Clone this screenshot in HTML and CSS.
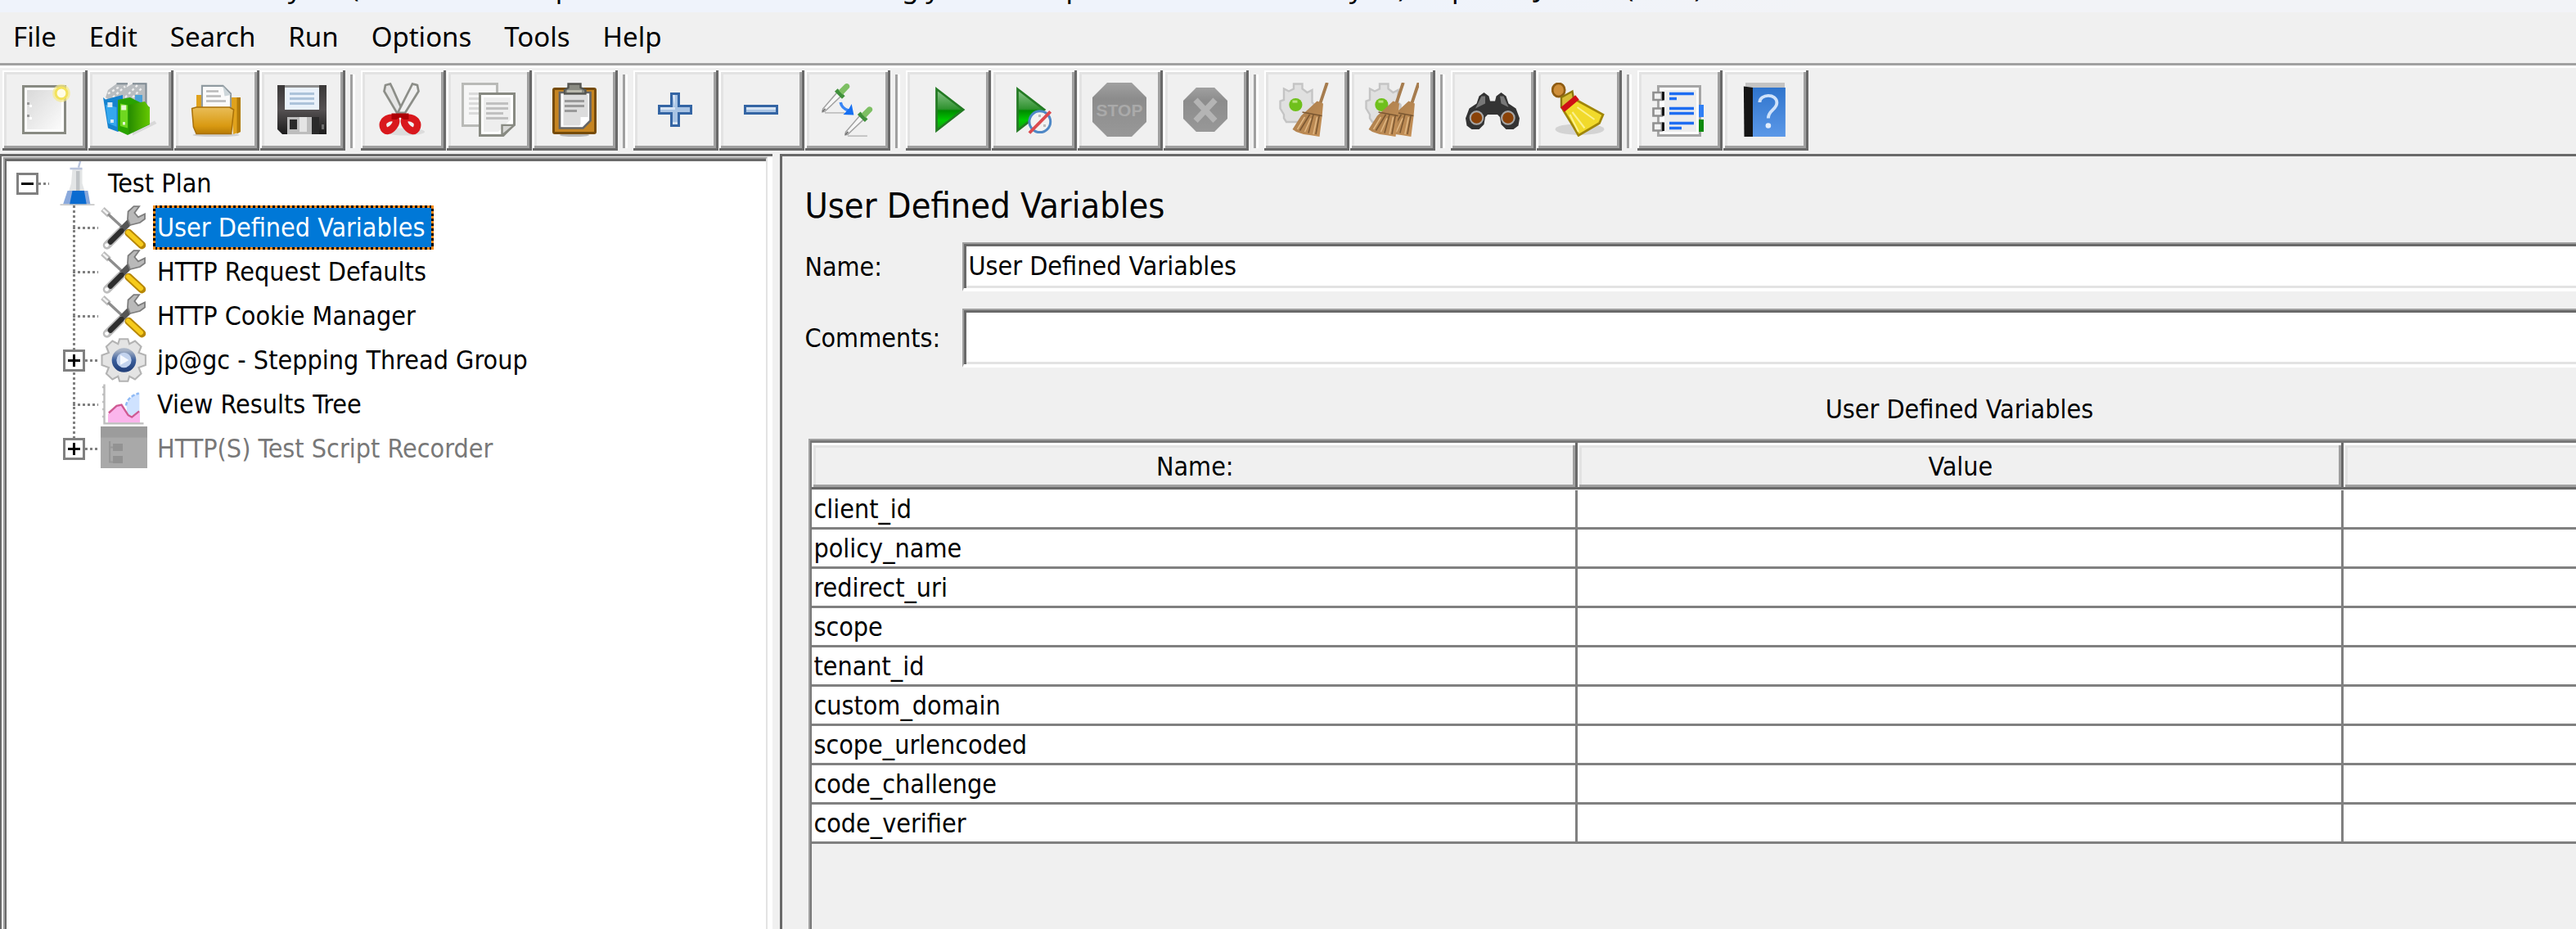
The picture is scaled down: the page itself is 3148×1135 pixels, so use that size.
FILE: index.html
```html
<!DOCTYPE html>
<html lang="en">
<head>
<meta charset="utf-8">
<title>Apache JMeter</title>
<link rel="stylesheet" href="styles.css">
</head>
<body>
<svg class="defs" aria-hidden="true">
  <defs>
    <linearGradient id="paper" x1="0" y1="0" x2="1" y2="1"><stop offset="0" stop-color="#d9d9d9"/><stop offset="1" stop-color="#fbfbfb"/></linearGradient>
    <linearGradient id="gold" x1="0" y1="0" x2="0" y2="1"><stop offset="0" stop-color="#e9bd58"/><stop offset=".7" stop-color="#d99a12"/><stop offset="1" stop-color="#b87b05"/></linearGradient>
    <linearGradient id="dark" x1="0" y1="0" x2="0" y2="1"><stop offset="0" stop-color="#3a3838"/><stop offset=".5" stop-color="#555152"/><stop offset="1" stop-color="#1b1b1b"/></linearGradient>
    <linearGradient id="go" x1="0" y1="0" x2="0" y2="1"><stop offset="0" stop-color="#8fc88f"/><stop offset=".48" stop-color="#2f922f"/><stop offset=".52" stop-color="#008a00"/><stop offset=".75" stop-color="#00c800"/><stop offset="1" stop-color="#1a9a1a"/></linearGradient>
    <linearGradient id="leaf" x1="0" y1="0" x2="1" y2="0"><stop offset="0" stop-color="#268c00"/><stop offset="1" stop-color="#66c800"/></linearGradient>
    <linearGradient id="book" x1="0" y1="0" x2="0" y2="1"><stop offset="0" stop-color="#2f74cc"/><stop offset="1" stop-color="#5b98e8"/></linearGradient>
    <linearGradient id="straw" x1="0" y1="0" x2="1" y2="1"><stop offset="0" stop-color="#a57a4a"/><stop offset="1" stop-color="#c79258"/></linearGradient>
    <linearGradient id="off" x1="0" y1="0" x2="0" y2="1"><stop offset="0" stop-color="#a0a0a0"/><stop offset=".3" stop-color="#8c8c8c"/><stop offset="1" stop-color="#989898"/></linearGradient>
    <linearGradient id="ring" x1="0" y1="0" x2="0" y2="1"><stop offset="0" stop-color="#a9b4c6"/><stop offset=".5" stop-color="#3c5f9c"/><stop offset="1" stop-color="#24427c"/></linearGradient>
    <g id="cog"><path fill="#e0e0e0" stroke="#c4c4c4" stroke-width=".8" d="M6 2.500V.5h3.500v2l2 1.500 2-1v5l1 1v4l-4 2-1 1H3l-1-1.500V13L.5 10.500v-3L2 7V2.500l2 1z"/><circle cx="6.800" cy="9" r="2.700" fill="#6fc01c"/><path fill="#b6e377" d="M5.500 7.200h2v1h-2z"/></g>
    <g id="besom"><path stroke="#a67c4e" stroke-width="1.300" d="M19.600 0l-3 9"/><path fill="url(#straw)" d="M15.500 7.500l2.500 1L17.500 14 16.500 22 13 21.400 10 21 7 20 5.500 19 9 13.500z"/><path stroke="#7b5731" stroke-width=".5" fill="none" d="M9.500 12l8 1.500M12.500 13l-4 6.500M14 13l-2 7.500M16.500 13l-1.500 8"/><path stroke="#e0b884" stroke-width=".5" d="M10.500 14l-3 5M13 14.500L10.500 20M15.500 14l-1.500 7"/></g>
    <g id="dropper"><path fill="#f7f7f7" stroke="#a0a0a0" stroke-width=".5" d="M7.300 3.600l1.600 1.600L2 11.700l-1 .2.200-1.200z"/><path stroke="#777" stroke-width=".6" d="M1 11.800l1.200-1.200"/><path fill="#3f8f3a" d="M6 3.600l1.200-1.200 3 3L9 6.600z"/><path fill="#7dbf63" d="M7.600 3.200l2.600-2.600c1-.8 2.500.5 1.700 1.600L9.300 4.900z"/><path stroke="#aaa" stroke-width=".4" d="M2 12.300h8"/></g>
  </defs>
  <symbol id="i-tools" viewBox="0 0 19 18">
    <path stroke="#bcbcbc" stroke-width="2.200" d="M.800 1.500L3.500 4"/><path stroke="#f4f4f4" stroke-width=".8" d="M1 1.700L3 3.500"/><path stroke="#8d8d8d" stroke-width="1.100" d="M3 3.500L9.500 9.500"/>
    <path stroke="#555" stroke-width="2.600" d="M8 10.500l4-4"/><path fill="#b9b9b9" stroke="#7d7d7d" stroke-width=".6" d="M11 5.500l.2-3L13.500.4h2.200L13.800 3l1.500 1.800L18 3.500v2L16 7l-4 1z"/>
    <path stroke="#bdbdbd" stroke-width="3.400" stroke-linecap="round" d="M2.600 16.200L8 10.800"/><path stroke="#2e2e2e" stroke-width="2.200" stroke-linecap="round" d="M4 14.800l4.500-4.500"/><circle cx="2.500" cy="16.200" r=".8" fill="#fff"/>
    <path stroke="#b78705" stroke-width="3.200" stroke-linecap="round" d="M11.400 11.200l5.400 5"/><path stroke="#f6cb1c" stroke-width="1.900" stroke-linecap="round" d="M11.200 11l5.200 4.800"/>
  </symbol>
</svg>

<div class="app">
  <div class="titlebar">                                         y       (                            p                                               g y                  p                                      y     )    Apache JMeter (5.6.3)</div>

  <nav class="menubar">
    <button>File</button><button>Edit</button><button>Search</button><button>Run</button><button>Options</button><button>Tools</button><button>Help</button>
  </nav>

  <div class="toolbar" role="toolbar">
    <div class="group">
      <button aria-label="New"><svg viewBox="0 0 22 22"><path fill="#888a82" d="M2 1h18v20H2z"/><path fill="#fff" d="M3 2h16v18H3z"/><path fill="url(#paper)" d="M4 3h14v16H4z"/><path fill="#999" d="M4 8h1v1H4zM4 13h1v1H4z"/><path fill="#fff" d="M5 9h1v1H5zM5 14h1v1H5z"/><circle cx="18" cy="4.300" r="3.600" fill="#f5e98a" opacity=".7"/><circle cx="18" cy="4.300" r="2.300" fill="#fffde6" stroke="#f3e25b"/></svg></button>
      <button aria-label="Templates"><svg viewBox="0 0 22 22"><path fill="#d8d8d8" d="M12 20l9-4.500.8 1.200L12 21.500z"/><path fill="#b9bdc0" d="M1 6l1-3L5.500.4H10l-.5 1.500L12 .4h5.500V10L8 11z"/><path fill="none" stroke="#7f8a92" stroke-width=".7" d="M5.500.4H10M12 .4h5.500V10"/><path fill="none" stroke="#eee" stroke-width=".8" stroke-dasharray="1 1" d="M2 4.500l5-3M4 6l5-4.500M9 6l5-5M12 6l4-4"/><path fill="#1683cf" d="M0 6l1 .8 5-1.300L8 5v14l-2 1-4-1.500z"/><path fill="#35a7ee" d="M1 9l4.500 1V18L2 16.500z"/><path fill="#d6e9f6" d="M1.800 8h2v2h-2zM3 15h1.300v1.300H3z"/><path fill="#4aa0d8" d="M13 5h3v4l-3-2z"/><path fill="#2aa300" d="M6 7l5-1 8 4v7l-9 4.300L6 19.500z"/><path fill="url(#leaf)" d="M10.500 9L17 7.700l2 2.600v6.500l-8.500 4z"/><path fill="#6fd720" d="M7 8.500l3 .7v9.300l-3-.8z"/><path fill="#e6f7d4" d="M7.400 9.200h2v2h-2zM8 16h1v1.200H8z"/></svg></button>
      <button aria-label="Open"><svg viewBox="0 0 22 22"><ellipse cx="11" cy="21.300" rx="9.500" ry=".8" fill="#cfcfcf"/><path fill="#e0a21c" d="M3 5h2.300v6H3zM17 6h4v14l-3 1z"/><path fill="#b17a08" d="M19.500 6H21v14l-1.500.8z"/><path fill="#fafafa" stroke="#8f9aa0" stroke-width=".7" d="M5.300 1.300h8.500L17 4.500V12H5.300z"/><path fill="#cdd6da" d="M13.800 1.300L17 5l-2.500.5z"/><path stroke="#b9b9b9" stroke-width=".9" d="M7 3.500h5M7 5.500h6M7 7.500h8"/><path fill="url(#gold)" stroke="#a87008" stroke-width=".5" d="M1.200 10.500L3 10h13.500l1.700 1-1 9.800H3L1.800 18z"/></svg></button>
      <button aria-label="Save"><svg viewBox="0 0 22 22"><path fill="url(#dark)" d="M1 1h20v20H3l-2-2z"/><path fill="#8e8e8e" d="M4 1h14v1H4z"/><path fill="#e9f1fa" d="M4 2h14v9H4z"/><path stroke="#acc3da" d="M6 4.500h10M6 6.500h10M6 8.500h10"/><path fill="#bdbdbd" d="M5 14h10v7H5z"/><path fill="#e4e4e4" d="M10 14h3v6h-3z"/><path fill="#2a2a2a" d="M6 15h3v4H6zM15 14h3v7h-3z"/><path fill="#6f6f6f" d="M19 17h1v2h-1z"/></svg></button>
    </div>
    <i class="sep"></i>
    <div class="group">
      <button aria-label="Cut"><svg viewBox="0 0 22 22"><ellipse cx="12" cy="20" rx="8" ry="1.500" fill="#dcdcdc"/><path fill="#e6e6e6" stroke="#8c8e88" stroke-width=".9" d="M3.500 3.500L4 1l2-.5L7 2.500l4 9-2.300.8z"/><path fill="#f0f0f0" stroke="#8c8e88" stroke-width=".9" d="M17.500 3.500L17 1l-2-.5L14 2.500l-5 9.800h3z"/><path fill="none" stroke="#d9181d" stroke-width="2.900" d="M4 15.200c1.500-1.200 4-1.200 4.300.2s-1.500 3.800-3.300 4.200-3-3.200-1-4.400zM16 15.200c-1.500-1.200-4-1.200-4.300.2s1.500 3.800 3.300 4.200 3-3.200 1-4.400z"/><path fill="#ad0006" d="M6.500 12.500h7V15h-2L10 14.200 8.500 15h-2z"/></svg></button>
      <button aria-label="Copy"><svg viewBox="0 0 22 22"><path fill="#f6f6f6" stroke="#b9bab7" d="M.5.500h14v17H.500z"/><path stroke="#dadada" d="M3 4.500h8M3 6.500h8M3 8.500h8M3 10.500h5M3 12.500h5"/><path fill="#fff" stroke="#888a82" d="M7.500 4.500h14V17l-4.500 4.500H7.500z"/><path fill="#eee" d="M9 6h11v9l-5 5H9z"/><path stroke="#c0c0c0" d="M10 8.500h9M10 10.500h9M10 12.500h7M10 14.500h9"/><path fill="#d7d7d5" stroke="#888a82" stroke-width=".8" d="M16.500 21.500v-4.200h5z"/></svg></button>
      <button aria-label="Paste"><svg viewBox="0 0 22 22"><ellipse cx="11" cy="21.300" rx="6" ry=".7" fill="#b5b5b5"/><rect x="2.500" y="2.500" width="17" height="18" rx=".5" fill="#c58421" stroke="#764b07"/><path fill="#fff" stroke="#666" stroke-width=".9" d="M5 4h12.500v11.500L14.500 18.500H5z"/><path fill="#ddd" d="M6.500 5h10v9L13 17.500H6.500z"/><path fill="#fff" d="M13.500 17.500v-3.500h3.500z"/><path stroke="#9a9a9a" d="M7 7.500h8M7 9.500h8M7 11.500h5"/><path fill="#8a8b82" stroke="#555651" stroke-width=".8" d="M7 4.500V3l1.500-1V.5h5V2L15.500 3v1.500z"/><path fill="#b9b9ad" d="M8 3h6v1H8z"/></svg></button>
    </div>
    <i class="sep"></i>
    <div class="group">
      <button aria-label="Expand All"><svg viewBox="0 0 22 22"><path fill="#a9c4e4" stroke="#3465a4" d="M9.500 4.500h3v5h5v3h-5v5h-3v-5h-5v-3h5z"/><path fill="#d7e4f3" d="M10 5h1v5H5v1h6v-1zM10 16h2v1h-2z"/></svg></button>
      <button aria-label="Collapse All"><svg viewBox="0 0 22 22"><path fill="#a9c4e4" stroke="#3465a4" d="M4.500 9.500h13v3h-13z"/><path fill="#d7e4f3" d="M5 10h12v1H5z"/></svg></button>
      <button aria-label="Toggle"><svg viewBox="0 0 22 22"><use href="#dropper"/><use href="#dropper" x="9.300" y="9.400"/><path fill="none" stroke="#3a86f5" stroke-width="1.200" d="M8.400 8c.3 1.500 1.500 2.800 3.200 3.300"/><path fill="#1670f2" d="M9.500 13l4.300.2-.9-4.500-1 1.800z"/></svg></button>
    </div>
    <i class="sep"></i>
    <div class="group">
      <button aria-label="Start"><svg viewBox="0 0 22 22"><path fill="url(#go)" stroke="#237a23" stroke-width=".9" d="M6.500 2.600L17.400 11 6.500 19.500z"/></svg></button>
      <button aria-label="Start no pauses"><svg viewBox="0 0 22 22"><path fill="url(#go)" stroke="#237a23" stroke-width=".9" d="M4.500 2.600L15.400 11 4.500 19.500z"/><circle cx="13.600" cy="15.900" r="4.300" fill="#f2f2f2" stroke="#4f88c6"/><path fill="#bbb" d="M13 13h1v1h-1zM15 17h1v1h-1z"/><path stroke="#dc4a4e" stroke-width="1.300" d="M9.300 20.500l8.600-8.700"/></svg></button>
      <button aria-label="Stop" disabled><svg viewBox="0 0 22 22"><path fill="url(#off)" d="M6 0h10l6 6v10l-6 6H6l-6-6V6z"/><text x="11" y="13.500" class="stop-word">STOP</text></svg></button>
      <button aria-label="Shutdown" disabled><svg viewBox="0 0 22 22"><path fill="url(#off)" d="M7.300 2h7.400L20 7.300v7.400L14.700 20H7.300L2 14.700V7.300z"/><path stroke="#b4b4b4" stroke-width="2.400" d="M7 7l8 8.500M15 7l-8 8.500"/></svg></button>
    </div>
    <i class="sep"></i>
    <div class="group">
      <button aria-label="Clear"><svg viewBox="0 0 22 22"><use href="#cog"/><use href="#besom"/></svg></button>
      <button aria-label="Clear All"><svg viewBox="0 0 22 22"><use href="#cog"/><use href="#besom" x="2.300"/><use href="#besom" x="-4"/></svg></button>
    </div>
    <i class="sep"></i>
    <div class="group">
      <button aria-label="Search"><svg viewBox="0 0 22 22"><path fill="#333" d="M5.500 5.500L7.500 4l2 1.500.5 2h2l.5-2 2-1.500 2 1.500 1 3 3 2 1.500 4-.5 3-2 1.500h-3l-2-2-.5-3-1-1H9l-1 1-.5 3-2 2h-3l-2-1.500-.5-3 1.500-4 3-2z"/><path fill="#777" d="M6.500 5.500h1.500v3l-4 2zM14 5.500h1.500l2 4.500-3-1.500z"/><circle cx="4.500" cy="14.300" r="2.600" fill="#8a4208" stroke="#a5a5a5" stroke-width=".7"/><circle cx="17.300" cy="14.300" r="2.600" fill="#8a4208" stroke="#a5a5a5" stroke-width=".7"/></svg></button>
      <button aria-label="Reset Search"><svg viewBox="0 0 22 22"><ellipse cx="11.500" cy="19" rx="10" ry="2.300" fill="#d3d3d3"/><ellipse cx="2.900" cy="3" rx="2.500" ry="2.700" fill="#cf8f3a" stroke="#8f5c12" stroke-width=".9"/><path fill="#d7bd35" stroke="#8d770b" stroke-width=".8" d="M4 6l4.500-2.500.5 3 1.500 1.500-5 4L4 10z"/><path fill="#f1da2b" stroke="#a08608" stroke-width=".9" d="M10 7l11 6-1.500 3.500-8.500 5L9 18l-4-6.500z"/><path stroke="#fbf18f" stroke-width=".7" d="M10.500 10l7 5M8.500 12l5 6.500M7.500 13l3.500 7"/><path stroke="#cf1015" stroke-width="2.300" d="M4.500 11l6-5"/></svg></button>
    </div>
    <i class="sep"></i>
    <div class="group">
      <button aria-label="Function Helper"><svg viewBox="0 0 22 22"><path fill="#4a90ff" d="M18 9h3v5h-3z"/><path fill="#0c8a0c" d="M18 15h3v5h-3z"/><path fill="#fdfdfd" stroke="#a5a5a5" d="M2.500 1.500h17v20h-17z"/><path fill="#ededed" d="M5 3h13v17H5z"/><path fill="#2f7ff5" d="M19 9h2v5h-2z"/><path fill="#0c8a0c" d="M19 15h2v5h-2z"/><path fill="#f2f2f2" stroke="#909090" stroke-width=".9" d="M.5 4h3.500v3H.500zM.5 10.500h3.500v3H.500zM.5 16.500h3.500v3H.500z"/><path fill="#111" d="M4 3.700h1v3.500H4zM4 10h1v3.500H4zM4 16.200h1v3.500H4z"/><path stroke="#1e6df2" stroke-width="1.200" d="M7 4.500h10M7 6.500h3M7 10.500h10M7 12.500h10M7 16.500h10M7 18.500h5"/></svg></button>
      <button aria-label="Help"><svg viewBox="0 0 22 22"><path fill="#c3c3c3" d="M3 0h16v2H3z"/><path fill="#151515" d="M2.300 1.500L6 2v20H2.500z"/><path fill="url(#book)" d="M6 2h13.300v20H6z"/><path fill="none" stroke="#cfe2fa" stroke-width="1.300" d="M8.800 8c0-3.500 7-3.800 7 .2 0 2.800-3.500 3-3.500 6.300"/><circle cx="12.300" cy="17.500" r="1.100" fill="#e3eefc"/></svg></button>
    </div>
  </div>

  <main class="split">
    <aside class="tree-pane">
      <div class="tree-view">
        <div class="node root"><button class="knob minus" aria-label="Collapse"></button><i class="wire"></i>
          <svg class="pic" viewBox="0 0 19 18"><path fill="#e3e5e6" d="M6.500 3h4v6l2.500 8H3.500L6 9z"/><path fill="#bfc3c6" d="M8 4h1.500v8H8z"/><path stroke="#b9c4dd" stroke-width=".8" d="M5.500 3h5M9 2.500L9.700 0"/><path fill="#8aa9dc" d="M4.500 12h8.300l1 5.500H2.700z"/><path fill="#0a6bd0" d="M6.500 12h4.800l1 5.800H5.300z"/><path stroke="#c9c9c9" stroke-width=".6" d="M1.500 17.700h14"/></svg>
          <span>Test Plan</span></div>
        <ul class="tree">
          <li class="node"><i class="wire"></i><svg class="pic"><use href="#i-tools"/></svg><span class="selected">User Defined Variables</span></li>
          <li class="node"><i class="wire"></i><svg class="pic"><use href="#i-tools"/></svg><span>HTTP Request Defaults</span></li>
          <li class="node"><i class="wire"></i><svg class="pic"><use href="#i-tools"/></svg><span>HTTP Cookie Manager</span></li>
          <li class="node branch"><button class="knob" aria-label="Expand"></button><i class="wire"></i><svg class="pic" viewBox="0 0 19 18"><path fill="#e4e4e4" stroke="#b3b3b3" stroke-width=".7" d="M7.700.400h3.400l.6 2 2.300-1.200 2.500 2.300-1 2.500 2.800 1v4l-2.800 1 1 2.500-2.500 2.300-2.300-1.200-.6 2H7.700l-.6-2-2.300 1.200-2.500-2.300 1-2.500-2.800-1V7l2.800-1-1-2.500 2.500-2.300L7.100 2.400z"/><circle cx="9.500" cy="9" r="4" fill="#c3d3ee" stroke="url(#ring)" stroke-width="1.900"/><path fill="#f6f9ff" d="M8 6.800L11.500 9 8 11z"/></svg><span>jp@gc - Stepping Thread Group</span></li>
          <li class="node"><i class="wire"></i><svg class="pic" viewBox="0 0 19 18"><path fill="#cfe2ff" d="M10.500 9.500c.5-2.500 2-4 5.300-5.200v9.200h-5z"/><path fill="none" stroke="#8fbaf5" stroke-width=".8" stroke-dasharray="1.500 .7" d="M10.300 9.500c.5-2.500 2-4 5.300-5"/><path fill="#fbb5ec" d="M3 13l3.500-3.500 2-.5 3 4.500 2 .5 2.500-2v4.500H3z"/><path fill="none" stroke="#cf5a93" stroke-width=".8" d="M3.300 12.500L6.500 9.600l2-.4 2.700 4.200 1.500.8 3-2.400"/><path fill="none" stroke="#bdbdbd" stroke-width=".8" d="M1.500.800v16h16M.700 2h1M.700 5h1M.700 8h1M.700 11h1M.700 14h1"/></svg><span>View Results Tree</span></li>
          <li class="node branch last"><button class="knob" aria-label="Expand"></button><i class="wire"></i><svg class="pic" viewBox="0 0 19 18"><path fill="#a9a9a9" d="M0 0h19v17H0z"/><path fill="#9c9c9c" d="M0 0h19v4.500H0z"/><path fill="none" stroke="#979797" stroke-width=".7" d="M3.700 6v8.500h2M3.700 8.500h2"/><path fill="#929292" d="M5 7h4v3H5zM5 12h4v3H5z"/></svg><span class="disabled">HTTP(S) Test Script Recorder</span></li>
        </ul>
      </div>
    </aside>

    <section class="editor-pane">
      <div class="editor">
        <h1>User Defined Variables</h1>
        <form class="fields">
          <label for="name">Name:</label><input id="name" type="text" value="User Defined Variables">
          <label for="comments">Comments:</label><input id="comments" class="tall" type="text">
        </form>
        <h2 id="vars-title">User Defined Variables</h2>
        <div class="grid-box">
          <table aria-labelledby="vars-title">
            <thead><tr><th>Name:</th><th>Value</th><th></th></tr></thead>
            <tbody>
              <tr><td>client_id</td><td></td><td></td></tr>
              <tr><td>policy_name</td><td></td><td></td></tr>
              <tr><td>redirect_uri</td><td></td><td></td></tr>
              <tr><td>scope</td><td></td><td></td></tr>
              <tr><td>tenant_id</td><td></td><td></td></tr>
              <tr><td>custom_domain</td><td></td><td></td></tr>
              <tr><td>scope_urlencoded</td><td></td><td></td></tr>
              <tr><td>code_challenge</td><td></td><td></td></tr>
              <tr><td>code_verifier</td><td></td><td></td></tr>
            </tbody>
          </table>
        </div>
      </div>
    </section>
  </main>
</div>
</body>
</html>
```
FILE: styles.css
```css
* { box-sizing: border-box; }

body {
  margin: 0;
  background: #f0f0f0;
  color: #000;
  font: 32px/40px "DejaVu Sans Condensed", "DejaVu Sans", sans-serif;
}

button, input { font: inherit; color: inherit; margin: 0; }

.defs { position: absolute; width: 0; height: 0; }

.app {
  display: flex;
  flex-direction: column;
  height: 100vh;
  overflow: hidden;
}

/* Window title and menus */
.titlebar,
.menubar {
  font-family: "Noto Sans", "Open Sans", sans-serif;
  font-size: 33px;
}

.titlebar {
  height: 15px;
  flex: none;
  display: flex;
  align-items: flex-end;
  padding-bottom: 12px;
  overflow: hidden;
  white-space: pre;
  line-height: 36px;
  background: linear-gradient(90deg, #eff3fb 55%, #f2f3f7 70%);
}

.menubar {
  flex: none;
  display: flex;
  gap: 40px;
  height: 68px;
  padding: 0 16px 6px;
  border-bottom: 3px solid #fff;
  box-shadow: inset 0 -3px #a0a0a0;
}

.menubar button { padding: 0; border: 0; background: none; }

/* Toolbar */
.toolbar {
  flex: none;
  display: flex;
  padding: 3px 3px 4px;
}

.group { display: flex; gap: 1px; }

.group button {
  display: grid;
  place-items: center;
  width: 104px;
  height: 98px;
  padding: 4px 6px 6px 4px;
  border: 0;
  background: #f0f0f0;
  box-shadow: inset -3px -3px #696969, inset 2px 2px #fff,
    inset -6px -6px #a0a0a0, inset 5px 5px #e3e3e3;
}

.group svg { width: 66px; height: 66px; }

.stop-word {
  font: bold 7px "Liberation Sans", sans-serif;
  fill: #aaa;
  text-anchor: middle;
}

.sep {
  width: 6px;
  margin: 5px 7px 3px 6px;
  border-left: 3px solid #a0a0a0;
  border-right: 3px solid #fff;
}

/* Panes */
.split {
  flex: 1;
  min-height: 0;
  display: grid;
  grid-template-columns: 30% 1fr;
  column-gap: 9px;
}

.tree-pane {
  padding: 1px 6px 0 2px;
  border: solid #696969;
  border-width: 3px 0 0 2px;
  box-shadow: inset -6px 0 #fff;
}

.tree-view {
  height: 100%;
  padding-top: 3px;
  padding-left: 3px;
  border: solid #a0a0a0;
  border-width: 2px 2px 0 2px;
  border-right-color: #e3e3e3;
  background: #fff;
  box-shadow: inset 2px 3px #696969;
}

.node {
  display: flex;
  align-items: center;
  height: 54px;
}

.root { padding-left: 11px; }

.tree {
  margin: 0;
  padding: 0 0 0 80px;
  list-style: none;
}

.tree .node {
  background: repeating-linear-gradient(#808080 0 3px, transparent 3px 6px) 0 0 / 3px 100% no-repeat;
}

.tree .last { background-size: 3px 16px; }

.knob {
  flex: none;
  width: 27px;
  height: 27px;
  padding: 0;
  border: 3px solid #808080;
  background:
    linear-gradient(#000, #000) center / 15px 3px no-repeat,
    linear-gradient(#000, #000) center / 3px 15px no-repeat,
    #fff;
}

.knob.minus { background: linear-gradient(#000, #000) center / 15px 3px no-repeat, #fff; }

.branch .knob { margin-left: -12px; }

.wire {
  flex: none;
  width: 31px;
  height: 3px;
  margin-right: 3px;
  background: repeating-linear-gradient(90deg, #808080 0 3px, transparent 3px 6px);
}

.root .wire { width: 13px; margin-right: 9px; }
.branch .wire { width: 16px; }

.pic { flex: none; width: 57px; height: 54px; }

.node span {
  height: 54px;
  padding: 0 10px 0 5px;
  margin-left: 7px;
  line-height: 54px;
  white-space: nowrap;
}

.root .pic { margin-right: -6px; }

.node .selected {
  border: 3px dotted #ff8c1a;
  padding: 0 7px 0 2px;
  line-height: 48px;
  color: #fff;
  background: linear-gradient(#0078d7, #0078d7) padding-box, #000;
}

.node .disabled { color: #787878; }

/* Element editor, wider than the visible pane */
.editor-pane {
  min-width: 0;
  overflow: hidden;
  border: solid #696969;
  border-width: 3px 0 0 3px;
}

.editor {
  display: flex;
  flex-direction: column;
  width: 130%;
  height: 100%;
  padding: 30px 0 0 27px;
}

h1, h2 { margin: 0; font-weight: normal; }
h1 { font-size: 43px; line-height: 60px; }
h2 { padding: 31px 0 16px; font-size: inherit; text-align: center; }

.fields {
  display: grid;
  grid-template-columns: 193px 1fr;
  align-items: center;
  row-gap: 21px;
  margin-top: 15px;
}

.fields input {
  width: 100%;
  height: 60px;
  padding: 0 5px;
  border: solid;
  border-width: 2px 2px 4px;
  border-color: #a0a0a0 #fff #fff #a0a0a0;
  border-radius: 0;
  background: #fff;
  box-shadow: inset 3px 3px #696969, inset 0 -3px #e3e3e3;
  outline: 0;
}

.fields .tall { height: 72px; }

.grid-box {
  flex: 1;
  min-height: 0;
  margin: 0 6px 0 5px;
  padding: 3px 0 0 2px;
  border: solid #a0a0a0;
  border-width: 2px 0 0 2px;
  box-shadow: inset 2px 3px #777;
}

table {
  width: 100%;
  table-layout: fixed;
  border-spacing: 0;
}

th {
  height: 58px;
  padding: 0;
  font-weight: normal;
  border-bottom: 1px solid #eee;
  box-shadow: inset -3px -3px #696969, inset 2px 3px #fff,
    inset -6px -6px #a0a0a0, inset 5px 6px #e3e3e3;
}

td {
  height: 48px;
  padding: 0 2px;
  background: #fff;
  border: solid #808080;
  border-width: 0 3px 3px 0;
}
```
